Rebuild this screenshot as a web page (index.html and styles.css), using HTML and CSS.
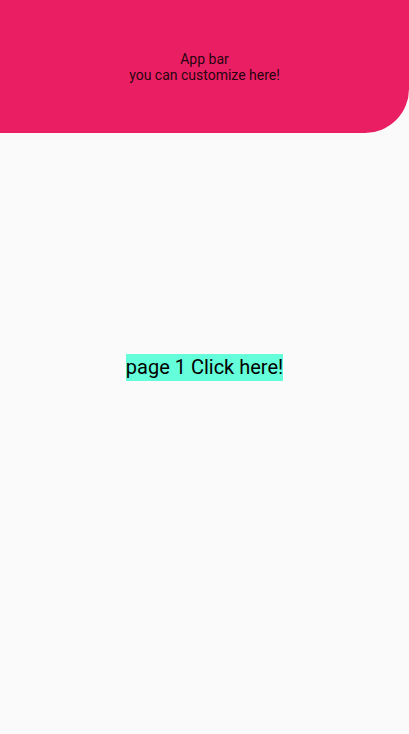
FILE: index.html
```html
<!DOCTYPE html>
<html>
<head>
<meta charset="utf-8">
<link rel="stylesheet" href="styles.css">
</head>
<body>
<div class="screen">
  <header class="appbar">
    <div class="title">App bar<br>you can customize here!</div>
  </header>
  <main class="content">
    <div class="btn">page 1 Click here!</div>
  </main>
</div>
</body>
</html>
```
FILE: styles.css
```css
html, body { margin: 0; padding: 0; }
body {
  width: 409px;
  height: 734px;
  background: #fafafa;
  font-family: Roboto, "Noto Sans", sans-serif;
  overflow: hidden;
}
.screen {
  display: flex;
  flex-direction: column;
  height: 734px;
}
.appbar {
  height: 133px;
  background: #e91e63;
  border-bottom-right-radius: 44px;
  display: flex;
  align-items: center;
  justify-content: center;
  flex-shrink: 0;
}
.title {
  font-size: 14px;
  line-height: 16px;
  color: rgba(0,0,0,0.87);
  text-align: center;
}
.content {
  flex: 1;
  display: flex;
  align-items: center;
  justify-content: center;
  padding-bottom: 133px;
}
.btn {
  background: #64ffda;
  font-size: 20px;
  line-height: 27px;
  color: #000;
}
```
